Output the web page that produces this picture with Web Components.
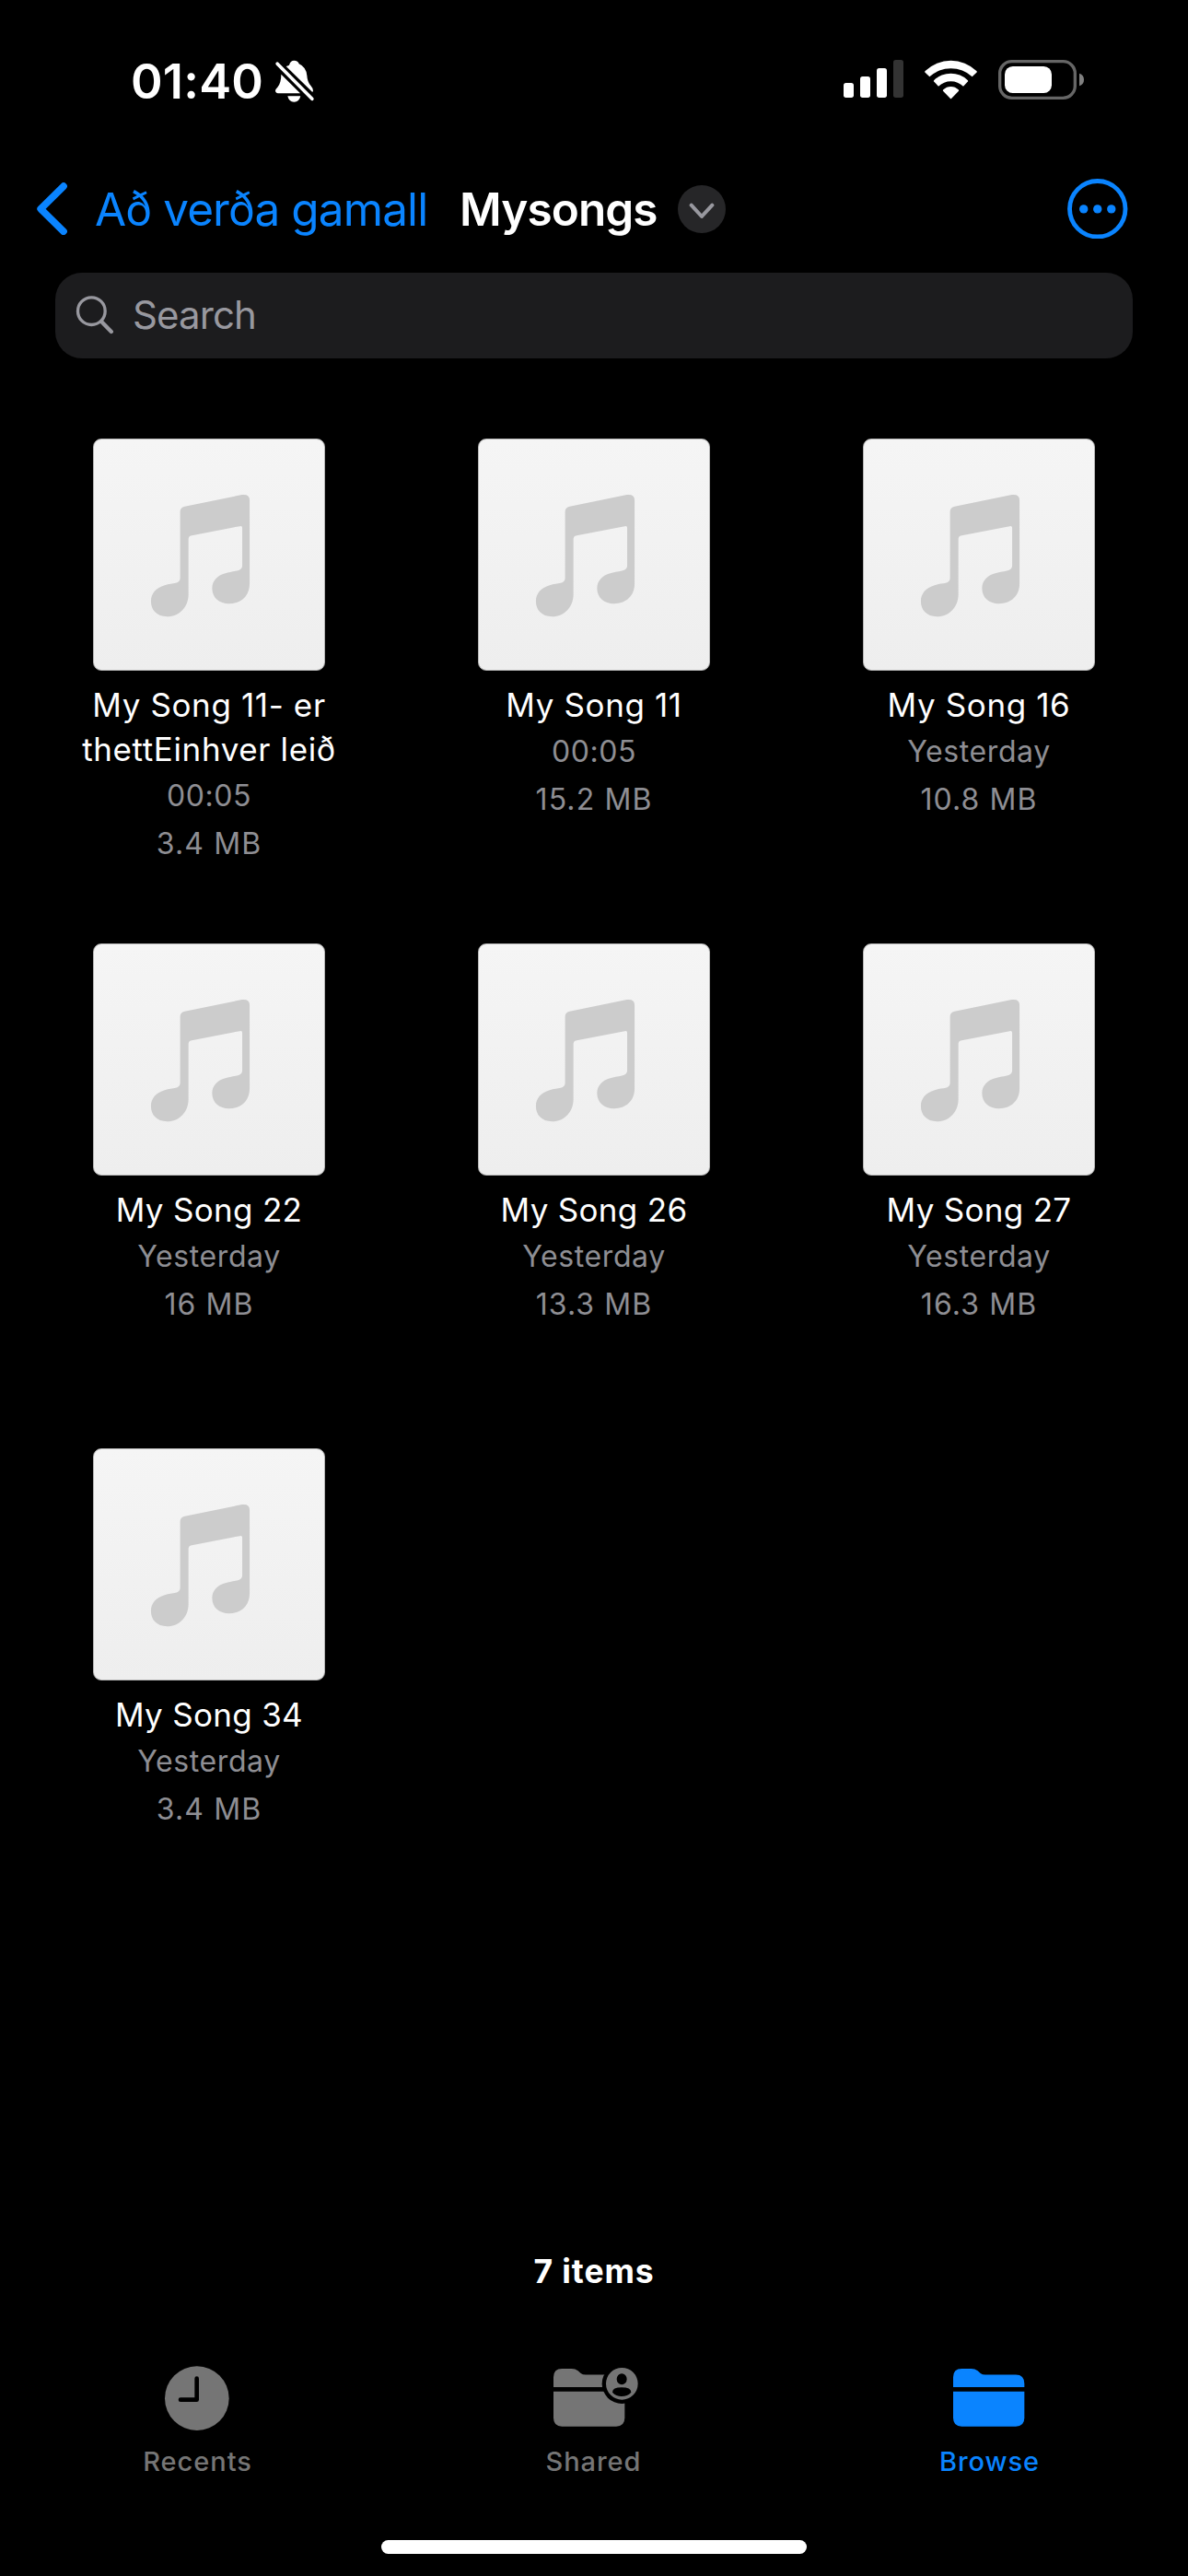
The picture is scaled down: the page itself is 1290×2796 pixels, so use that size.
<!DOCTYPE html>
<html lang="en">
<head>
<meta charset="utf-8">
<title>Mysongs</title>
<style>
  html { background: #000; }
  body {
    margin: 0;
    width: 1290px;
    height: 2796px;
    overflow: hidden;
    background: #000;
    color: #fff;
    font-family: Inter, "Liberation Sans", sans-serif;
    display: flex;
    flex-direction: column;
    --blue: #0a84ff;
    --secondary: #8e8e93;
  }
  .wide { --name-track: .62px; }
</style>
</head>
<body>
  <status-bar>01:40</status-bar>
  <nav-bar><span slot="back">Að verða gamall</span><span slot="title">Mysongs</span></nav-bar>
  <search-field>Search</search-field>
  <file-grid>
    <file-item class="wide"><span slot="name">My Song 11- er thettEinhver leið</span><span slot="date">00:05</span><span slot="size">3.4 MB</span></file-item>
    <file-item class="wide"><span slot="name">My Song 11</span><span slot="date">00:05</span><span slot="size">15.2 MB</span></file-item>
    <file-item class="wide"><span slot="name">My Song 16</span><span slot="date">Yesterday</span><span slot="size">10.8 MB</span></file-item>
    <file-item><span slot="name">My Song 22</span><span slot="date">Yesterday</span><span slot="size">16 MB</span></file-item>
    <file-item><span slot="name">My Song 26</span><span slot="date">Yesterday</span><span slot="size">13.3 MB</span></file-item>
    <file-item><span slot="name">My Song 27</span><span slot="date">Yesterday</span><span slot="size">16.3 MB</span></file-item>
    <file-item><span slot="name">My Song 34</span><span slot="date">Yesterday</span><span slot="size">3.4 MB</span></file-item>
  </file-grid>
  <item-count>7 items</item-count>
  <tab-bar>
    <tab-item icon="clock">Recents</tab-item>
    <tab-item icon="shared">Shared</tab-item>
    <tab-item icon="folder" active>Browse</tab-item>
  </tab-bar>
  <home-indicator></home-indicator>

<script>
const define = (name, html) => customElements.define(name, class extends HTMLElement {
  constructor() {
    super();
    this.attachShadow({ mode: 'open' }).innerHTML =
      '<style>svg{display:block;flex:none}</style>' + (typeof html === 'function' ? html(this) : html);
  }
});

define('status-bar', `
  <style>
    :host { display: flex; height: 150px; box-sizing: border-box; padding: 0 113px 0 142px; align-items: flex-start; }
    .time { font-size: 52.5px; font-weight: 600; letter-spacing: .2px; line-height: 64px; margin-top: 56px; width: 154px; }
    .bell { margin-top: 63px; }
    .right { margin: 65px 0 0 auto; display: flex; gap: 23px; }
  </style>
  <div class="time"><slot></slot></div>
  <svg class="bell" width="47" height="50" viewBox="528 69 141 150" fill="#fff">
    <path d="M572 96 Q577 94 582 92 Q586 77 598 77 Q611 77 614 88 Q637 98 640 126 Q641 147 653 160 Q660 168 660 176 Q660 179 657 179 Z"/>
    <path d="M556 122 L618 184 L546 184 Q537 183 537 175 Q537 170 544 164 Q556 150 556 122Z"/>
    <path d="M577 193H619Q615 212 598 212Q581 212 577 193Z"/>
    <path d="M543.5 87.5L656.5 202" stroke="#fff" stroke-width="11" stroke-linecap="round"/>
  </svg>
  <div class="right">
    <svg width="65" height="41" viewBox="78 78 195 123" fill="#fff">
      <rect x="78" y="153" width="33" height="48" rx="8"/>
      <rect x="132" y="132" width="33" height="69" rx="8"/>
      <rect x="186" y="105" width="33" height="96" rx="8"/>
      <rect x="240" y="78" width="33" height="123" rx="8" fill="#333"/>
    </svg>
    <svg width="57" height="43" viewBox="342 75 171 129" fill="#fff">
      <path d="M344 116Q341 114 344 111A120 120 0 0 1 511 111Q514 114 511 116L497 130A102 102 0 0 0 358 130Z"/>
      <path d="M373 146Q370 144 373 141A79 79 0 0 1 482 141Q485 144 482 146L468 161A59 59 0 0 0 387 161Z"/>
      <path d="M402 176Q400 174 403 172A35 35 0 0 1 452 172Q455 174 453 176L429 201Q427.500 203 426 201Z"/>
    </svg>
    <svg width="93" height="43" viewBox="582 75 279 129">
      <rect x="587" y="80" width="245" height="119" rx="39" fill="none" stroke="#666" stroke-width="10"/>
      <rect x="603" y="96" width="153" height="87" rx="26" fill="#fff"/>
      <path d="M846 119Q861 124 861 139.500Q861 155 846 160Z" fill="#808080"/>
    </svg>
  </div>`);

define('nav-bar', `
  <style>
    :host { display: flex; height: 146px; box-sizing: border-box; padding: 0 65.500px 0 40px; align-items: flex-start; font-size: 49.500px; line-height: 60px; white-space: nowrap; }
    .chev { margin-top: 48px; }
    .back { margin: 47px 0 0 30px; color: var(--blue); letter-spacing: -.9px; width: 396px; }
    .title { margin-top: 47px; font-weight: 600; letter-spacing: -.9px; width: 237px; }
    .menu { margin-top: 51px; }
    .more { margin: 43.500px 0 0 auto; }
  </style>
  <svg class="chev" width="33" height="57" viewBox="60 84 99 171" fill="none" stroke="#0a84ff" stroke-width="23" stroke-linecap="round" stroke-linejoin="round"><path d="M147 96.500L72.500 170L147 243.500"/></svg>
  <div class="back"><slot name="back"></slot></div>
  <div class="title"><slot name="title"></slot></div>
  <svg class="menu" width="52" height="52" viewBox="798 93 156 156"><circle cx="876" cy="171" r="78" fill="#262628"/><path d="M842 158L876 195L910 158" fill="none" stroke="#98989f" stroke-width="12" stroke-linecap="round" stroke-linejoin="round"/></svg>
  <svg class="more" width="65.500" height="65.500" viewBox="116.500 71 196 196" fill="#0a84ff"><circle cx="214.500" cy="169" r="90.500" fill="none" stroke="#0a84ff" stroke-width="14.500"/><circle cx="169.500" cy="169.500" r="14"/><circle cx="214.500" cy="169.500" r="14"/><circle cx="259.500" cy="169.500" r="14"/></svg>`);

define('search-field', `
  <style>
    :host { display: flex; align-items: flex-start; height: 93px; margin: 0 60px; padding-left: 22px; box-sizing: border-box; border-radius: 29px; background: #1c1c1e; color: #98989f; font-size: 42px; letter-spacing: -.9px; }
    svg { margin-top: 25px; }
    .t { margin: 20px 0 0 20px; line-height: 52px; }
  </style>
  <svg width="42" height="42" viewBox="186 453 126 126" fill="none" stroke="#98989f" stroke-linecap="round"><circle cx="238" cy="503" r="44.500" stroke-width="10"/><path d="M271 538L302.500 570" stroke-width="13"/></svg>
  <div class="t"><slot></slot></div>`);

define('file-grid', `
  <style>
    :host { display: grid; grid-template-columns: repeat(3, 418px); grid-auto-rows: 548px; margin: 87px 18px 0; height: 1644px; }
  </style><slot></slot>`);

define('file-item', `
  <style>
    :host { display: flex; flex-direction: column; align-items: center; text-align: center; }
    .tile { width: 252px; height: 252px; box-sizing: border-box; border: 1px solid #b4b4b4; border-radius: 9px; background: linear-gradient(#f5f5f5, #eee); margin-bottom: 13px; }
    .tile svg { margin: -1px; }
    .name { font-size: 35px; line-height: 48px; letter-spacing: var(--name-track, .3px); max-width: 290px; }
    .sub { font-size: 32px; line-height: 52px; color: var(--secondary); height: 52px; letter-spacing: 1.1px; }
    .sub.date { height: 51.500px; margin-top: 1px; letter-spacing: .6px; }
  </style>
  <div class="tile"><svg width="252" height="252" viewBox="63.500 48 755 755" fill="#ccc"><path fill-rule="evenodd" d="M347 286Q347 273 362 269L548 231Q573 228 573 248V520C573 560 545 585 506 585C475 585 451 567 451 535C451 510 468 493 494 486C505 483 518 481 532 478Q549 474 549 462V338Q549 331 541 333L381 364Q374 366 374 374V555C374 595 345 627 305 627C270 627 252 605 252 577C252 552 268 533 297 525C310 521 322 520 333 518Q347 514 347 502Z"/></svg></div>
  <div class="name"><slot name="name"></slot></div>
  <div class="sub date"><slot name="date"></slot></div>
  <div class="sub"><slot name="size"></slot></div>`);

define('item-count', `
  <style>
    :host { display: block; margin-top: 322px; text-align: center; font-size: 35.500px; font-weight: 650; line-height: 48px; letter-spacing: .9px; }
  </style><slot></slot>`);

define('tab-bar', `
  <style>
    :host { display: flex; margin-top: 78px; margin-left: -1px; width: 1290px; height: 189px; }
  </style><slot></slot>`);

const icons = {
  clock: `<mask id="m"><rect x="100" y="400" width="320" height="240" fill="#fff"/><path d="M251 455V524H198" fill="none" stroke="#000" stroke-width="14" stroke-linecap="round" stroke-linejoin="round"/></mask>
    <circle cx="251.500" cy="519.500" r="104.500" mask="url(#m)"/>`,
  shared: `<mask id="m"><rect x="100" y="400" width="320" height="240" fill="#fff"/><circle cx="346" cy="472" r="65" fill="#000"/></mask>
    <g mask="url(#m)"><path d="M123 483V451Q123 423 151 423H182Q194 423 203 430L212 438Q218 442.500 228 442.500H327Q355 442.500 355 472V483Z"/><path d="M123 497H355V583Q355 611 327 611H151Q123 611 123 583Z"/></g>
    <path fill-rule="evenodd" d="M346 420A52 52 0 1 0 346 524A52 52 0 1 0 346 420ZM345.500 439A16.500 18 0 1 1 345.500 475A16.500 18 0 1 1 345.500 439ZM315 500Q315 484 345 484Q376 484 376 500Q364 513 345 513Q327 513 315 500Z"/>`,
  folder: `<path d="M135 483V451Q135 423 163 423H194Q206 423 215 430L224 438Q230 442.500 240 442.500H339Q367 442.500 367 472V483Z"/><path d="M135 497H367V583Q367 611 339 611H163Q135 611 135 583Z"/>`
};
define('tab-item', el => `
  <style>
    :host { flex: 1; display: flex; flex-direction: column; align-items: center; color: #757575; }
    :host([active]) { color: var(--blue); }
    .l { margin-top: 15px; padding-left: 1px; font-size: 29px; font-weight: 500; line-height: 36px; letter-spacing: .95px; }
  </style>
  <svg width="100" height="71" viewBox="102 414 300 213" fill="currentColor">${icons[el.getAttribute('icon')]}</svg>
  <div class="l"><slot></slot></div>`);

define('home-indicator', `
  <style>
    :host { display: block; width: 462px; height: 15px; border-radius: 7.500px; background: #fff; margin: 0 auto; }
  </style>`);
</script>
</body>
</html>
